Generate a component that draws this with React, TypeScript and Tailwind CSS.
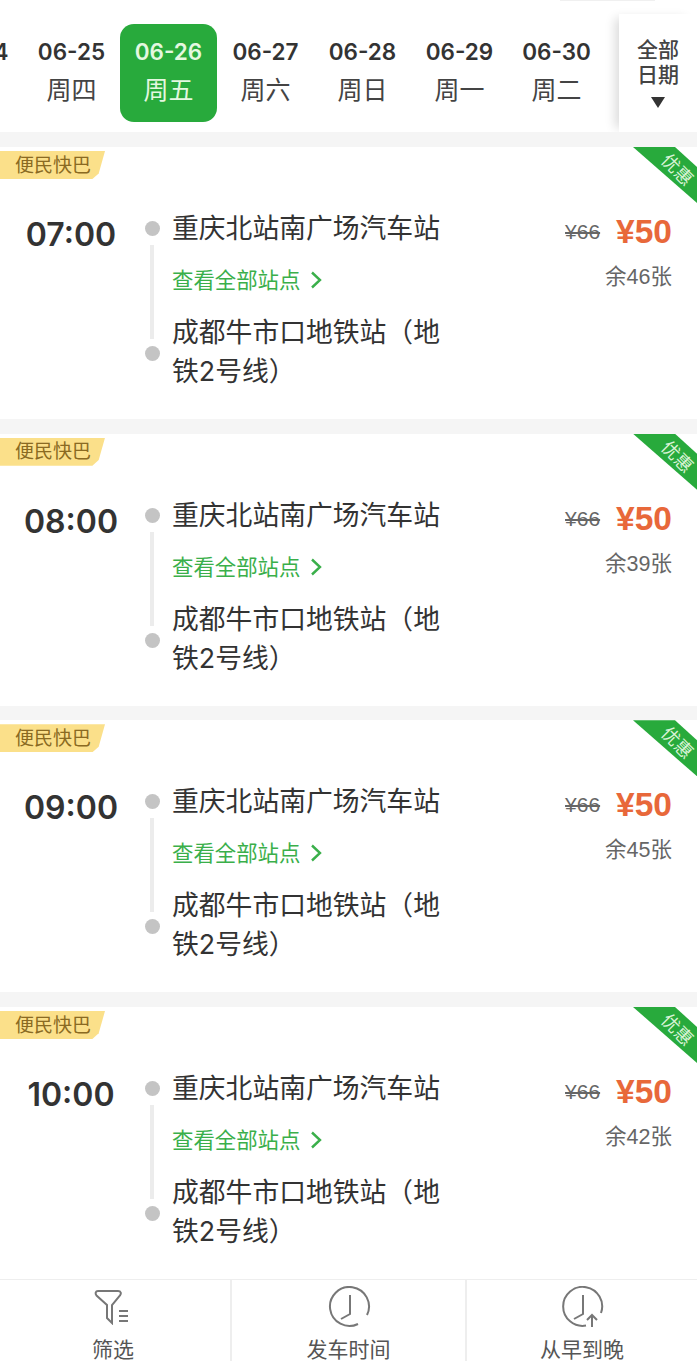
const DATES = [
  { date: '06-24', week: '周三' },
  { date: '06-25', week: '周四' },
  { date: '06-26', week: '周五', active: true },
  { date: '06-27', week: '周六' },
  { date: '06-28', week: '周日' },
  { date: '06-29', week: '周一' },
  { date: '06-30', week: '周二' },
];

const TRIPS = [
  { time: '07:00', left: 46 },
  { time: '08:00', left: 39 },
  { time: '09:00', left: 45 },
  { time: '10:00', left: 42 },
];

function DateBar() {
  return (
    <div className="relative h-[132px] overflow-hidden bg-white">
      <div className="absolute top-0 left-[560px] h-px w-[95px] bg-[#f0f0f0]" />
      <div className="flex w-[800px] -translate-x-[74px] pt-6">
        {DATES.map((d) => (
          <div
            key={d.date}
            className={`flex h-[98px] w-[97px] flex-col items-center rounded-[14px] pt-[13px] ${
              d.active ? 'bg-[#28aa3c] text-[#e4f8e0]' : 'text-[#333333]'
            }`}
          >
            <span className="text-[22.5px] leading-[30px] font-semibold">{d.date}</span>
            <span className={`mt-[5px] text-[25px] leading-[36px] ${d.active ? '' : 'text-[#444444]'}`}>{d.week}</span>
          </div>
        ))}
      </div>
      <div className="absolute top-[14px] right-0 bottom-0 flex w-[78px] flex-col items-center bg-white pt-[23px] shadow-[-8px_0_10px_-4px_rgba(0,0,0,0.14)]">
        <span className="text-[21px] leading-[25px] font-medium text-[#444444]">全部</span>
        <span className="text-[21px] leading-[25px] font-medium text-[#444444]">日期</span>
        <span className="mt-[10px] h-0 w-0 border-x-[7px] border-t-[11px] border-x-transparent border-t-[#333333]" />
      </div>
    </div>
  );
}

function TripCard({ time, left }: { time: string; left: number }) {
  return (
    <div className="relative flex h-[272px] bg-white">
      <div className="absolute top-[4px] left-0 flex h-[28px] w-[105px] items-center bg-[#fbe08a] pt-[2px] pl-[15px] text-[19px] text-[#8a6a22] [clip-path:polygon(6px_0,100%_0,94%_80%,88%_100%,0_100%,0_0)]">
        便民快巴
      </div>
      <div className="absolute top-0 right-0 h-[56px] w-[64px] bg-[#28aa3c] [clip-path:polygon(0_0,42px_0,100%_20px,100%_100%)]" />
      <span className="absolute top-[14px] right-[2px] rotate-45 text-[18px] leading-none text-[#d9f3d6]">优惠</span>

      <div className="w-[142px] pt-[66px] text-center text-[32px] leading-[44px] font-semibold text-[#333333]">{time}</div>

      <div className="flex w-[20px] flex-col items-center pt-[74px]">
        <span className="h-[15px] w-[15px] rounded-full bg-[#c4c4c4]" />
        <span className="mt-[9px] h-[94px] w-[4px] bg-[#ececec]" />
        <span className="mt-[7px] h-[15px] w-[15px] rounded-full bg-[#c4c4c4]" />
      </div>

      <div className="ml-[10px] w-[279px] pt-[61px] text-[26.8px] leading-[40px] text-[#333333]">
        <div>重庆北站南广场汽车站</div>
        <div className="mt-[12px] flex h-[40px] items-center text-[21.4px] text-[#3aaf4a]">
          查看全部站点
          <svg width="12" height="18" viewBox="0 0 12 18" fill="none" className="ml-[10px]">
            <path d="M2 1.500l8 7.500-8 7.500" stroke="#3aaf4a" strokeWidth="2.4" />
          </svg>
        </div>
        <div className="mt-[13px] leading-[39px]">成都牛市口地铁站（地铁2号线）</div>
      </div>

      <div className="flex flex-1 flex-col items-end pt-[63px] pr-[25px] [font-family:'Liberation_Sans','Noto_Sans_CJK_SC',sans-serif]">
        <div className="flex items-center">
          <span className="text-[21px] leading-[44px] text-[#666666] line-through">¥66</span>
          <span className="ml-[16px] text-[33.500px] leading-[44px] font-bold text-[#e8683a]">¥50</span>
        </div>
        <div className="mt-[7px] text-[21.500px] leading-[32px] text-[#666666]">余{left}张</div>
      </div>
    </div>
  );
}

function ClockIcon({ arrow }: { arrow?: boolean }) {
  return (
    <svg width="44" height="42" viewBox="0 0 44 42" fill="none" stroke="#777777" strokeWidth="2">
      <path d={arrow ? 'M26 39.600A19.500 19.500 0 1 1 41 27' : 'M31 38A19.500 19.500 0 1 1 40 29'} />
      <path d="M23 9v19l-9 5" />
      {arrow && <path d="M32 41V29m-5 5l5-5 5 5" />}
    </svg>
  );
}

function TabItem({ label, icon, className }: { label: string; icon: React.ReactNode; className: string }) {
  return (
    <div className={`flex h-full flex-col items-center pt-[6px] ${className}`}>
      <div className="flex h-[42px] shrink-0 items-center">{icon}</div>
      <span className="mt-[11px] text-[21px] leading-[22px] text-[#555555]">{label}</span>
    </div>
  );
}

export default function App() {
  return (
    <div className="h-[1361px] w-[697px] overflow-hidden bg-[#f5f5f5] [font-family:Inter,'Noto_Sans_CJK_SC',sans-serif]">
      <DateBar />
      <div className="flex flex-col gap-[14.670px] pt-[15px]">
        {TRIPS.map((t) => (
          <TripCard key={t.time} time={t.time} left={t.left} />
        ))}
      </div>
      <div className="-mt-px flex h-[83px] border-t-2 border-[#eeeeee] bg-white">
        <TabItem
          label="筛选"
          className="w-[230px] pr-[4px]"
          icon={
            <svg width="38" height="36" viewBox="0 0 38 36" fill="none" stroke="#777777" strokeWidth="2">
              <path d="M4 2h20c3 0 3.500 2.500 2 4.500L18 16v18l-5-5V16L2.500 6.500C1 4.500 1.500 2 4 2z" />
              <path d="M25 22h9M25 27h9M25 32h9" />
            </svg>
          }
        />
        <TabItem label="发车时间" className="w-[235px] border-l-2 border-[#eeeeee]" icon={<ClockIcon />} />
        <TabItem label="从早到晚" className="flex-1 border-l-2 border-[#eeeeee]" icon={<ClockIcon arrow />} />
      </div>
    </div>
  );
}
